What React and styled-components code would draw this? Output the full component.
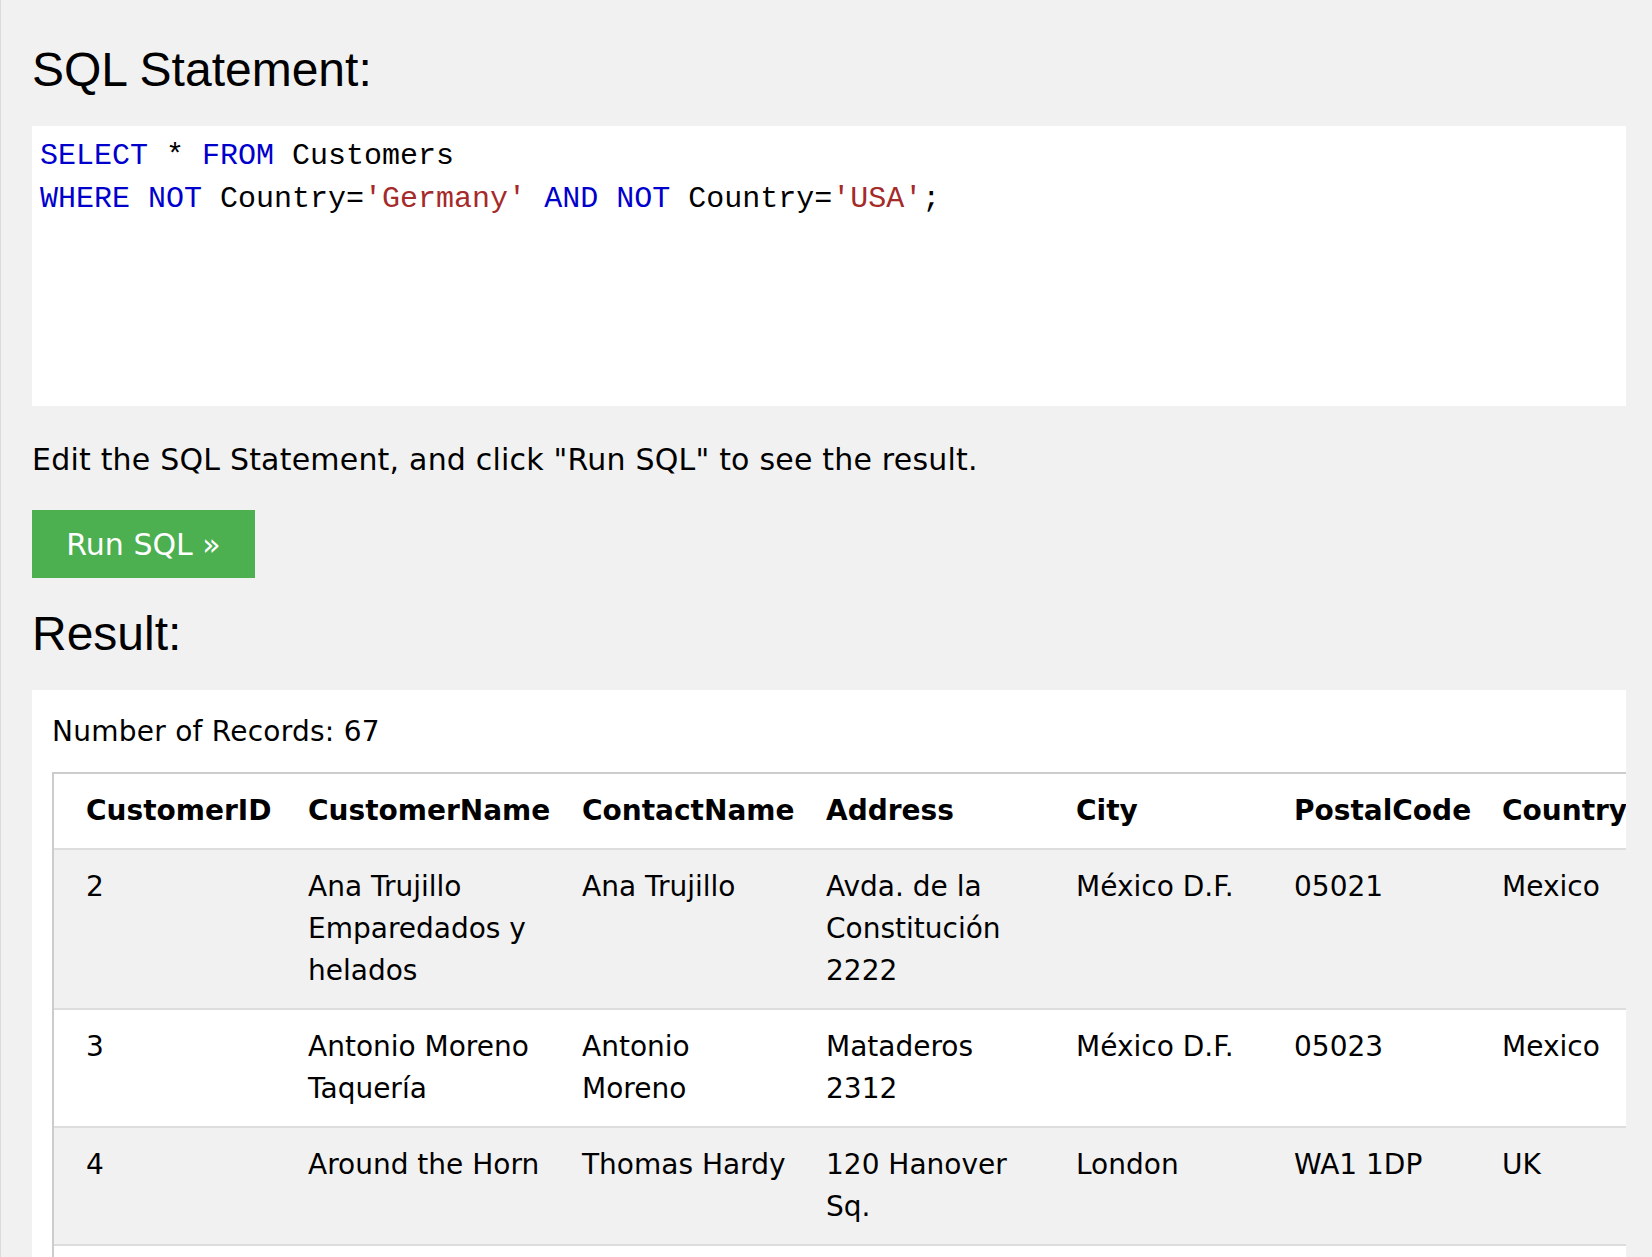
import React from 'react';
import styled, { createGlobalStyle } from 'styled-components';

const GlobalStyle = createGlobalStyle`
  html, body {
    margin: 0;
    padding: 0;
    background: #f1f1f1;
  }
  body {
    font-family: "DejaVu Sans", Verdana, sans-serif;
    color: #000;
  }
`;

const customers = [
  { id: 2, name: 'Ana Trujillo Emparedados y helados', contact: 'Ana Trujillo', address: 'Avda. de la Constitución 2222', city: 'México D.F.', postal: '05021', country: 'Mexico' },
  { id: 3, name: 'Antonio Moreno Taquería', contact: 'Antonio Moreno', address: 'Mataderos 2312', city: 'México D.F.', postal: '05023', country: 'Mexico' },
  { id: 4, name: 'Around the Horn', contact: 'Thomas Hardy', address: '120 Hanover Sq.', city: 'London', postal: 'WA1 1DP', country: 'UK' },
];

const columns = [
  { key: 'id', label: 'CustomerID', width: 238 },
  { key: 'name', label: 'CustomerName', width: 274 },
  { key: 'contact', label: 'ContactName', width: 244 },
  { key: 'address', label: 'Address', width: 250 },
  { key: 'city', label: 'City', width: 218 },
  { key: 'postal', label: 'PostalCode', width: 208 },
  { key: 'country', label: 'Country', width: 160 },
];

const tableWidth = columns.reduce((sum, c) => sum + c.width, 0) + 4;

const App = () => {
  return (
    <Page>
      <GlobalStyle />
      <Heading>SQL Statement:</Heading>
      <CodeBox>
        <Kw>SELECT</Kw> * <Kw>FROM</Kw> Customers
        {'\n'}
        <Kw>WHERE</Kw> <Kw>NOT</Kw> Country=<Str>'Germany'</Str> <Kw>AND</Kw> <Kw>NOT</Kw> Country=<Str>'USA'</Str>;
      </CodeBox>
      <Hint>Edit the SQL Statement, and click "Run SQL" to see the result.</Hint>
      <RunButton>Run SQL »</RunButton>
      <Heading $top={28}>Result:</Heading>
      <ResultBox>
        <Count>Number of Records: 67</Count>
        <Table style={{ width: tableWidth }}>
          <colgroup>
            {columns.map(c => (
              <col key={c.key} style={{ width: c.width }} />
            ))}
          </colgroup>
          <thead>
            <tr>
              {columns.map(c => (
                <Th key={c.key}>{c.label}</Th>
              ))}
            </tr>
          </thead>
          <tbody>
            {customers.map(row => (
              <Row key={row.id}>
                {columns.map(c => (
                  <Td key={c.key}>{row[c.key]}</Td>
                ))}
              </Row>
            ))}
            <BlankRow>
              <td colSpan={columns.length} />
            </BlankRow>
          </tbody>
        </Table>
      </ResultBox>
    </Page>
  );
};

const Page = styled.div`
  box-sizing: border-box;
  min-height: 100vh;
  border-left: 1px solid #dcdcdc;
  padding: 42px 26px 0 31px;
`;

const Heading = styled.h2`
  margin: ${props => props.$top || 0}px 0 28px;
  font-family: "Liberation Sans", Arial, sans-serif;
  font-weight: normal;
  font-size: 48px;
  line-height: 56px;
`;

const CodeBox = styled.pre`
  box-sizing: border-box;
  margin: 0;
  height: 280px;
  padding: 9px 8px 8px;
  background: #fff;
  font-family: "Liberation Mono", "Courier New", monospace;
  font-size: 30px;
  line-height: 43px;
  color: #000;
  white-space: pre;
`;

const Kw = styled.span`
  color: #0000cd;
`;

const Str = styled.span`
  color: #a52a2a;
`;

const Hint = styled.p`
  margin: 31px 0 28px;
  font-size: 30px;
  line-height: 45px;
  letter-spacing: 0.2px;
`;

const RunButton = styled.button`
  display: block;
  box-sizing: border-box;
  width: 223px;
  height: 68px;
  padding: 1px 0 0;
  border: none;
  background: #4caf50;
  color: #fff;
  font-family: "DejaVu Sans", Verdana, sans-serif;
  font-size: 30px;
  line-height: 36px;
  text-align: center;
  cursor: pointer;
`;

const ResultBox = styled.div`
  box-sizing: border-box;
  background: #fff;
  padding: 21px 0 0 20px;
  overflow: hidden;
  height: 600px;
`;

const Count = styled.div`
  font-size: 28px;
  line-height: 42px;
  margin-bottom: 19px;
  letter-spacing: 0.25px;
`;

const Table = styled.table`
  border-collapse: separate;
  border-spacing: 0;
  table-layout: fixed;
  border: 2px solid #ccc;
  font-size: 28px;
  line-height: 42px;
`;

const Th = styled.th`
  padding: 16px;
  text-align: left;
  vertical-align: top;
  font-weight: bold;
  border-bottom: 2px solid #ddd;
  white-space: nowrap;

  &:first-child {
    padding-left: 32px;
  }
`;

const Row = styled.tr`
  background: #fff;

  &:nth-child(odd) {
    background: #f1f1f1;
  }
`;

const BlankRow = styled.tr`
  background: #fff;

  td {
    height: 120px;
    padding: 0;
  }
`;

const Td = styled.td`
  padding: 16px;
  text-align: left;
  vertical-align: top;
  border-bottom: 2px solid #ddd;

  &:first-child {
    padding-left: 32px;
  }
`;

export default App;
